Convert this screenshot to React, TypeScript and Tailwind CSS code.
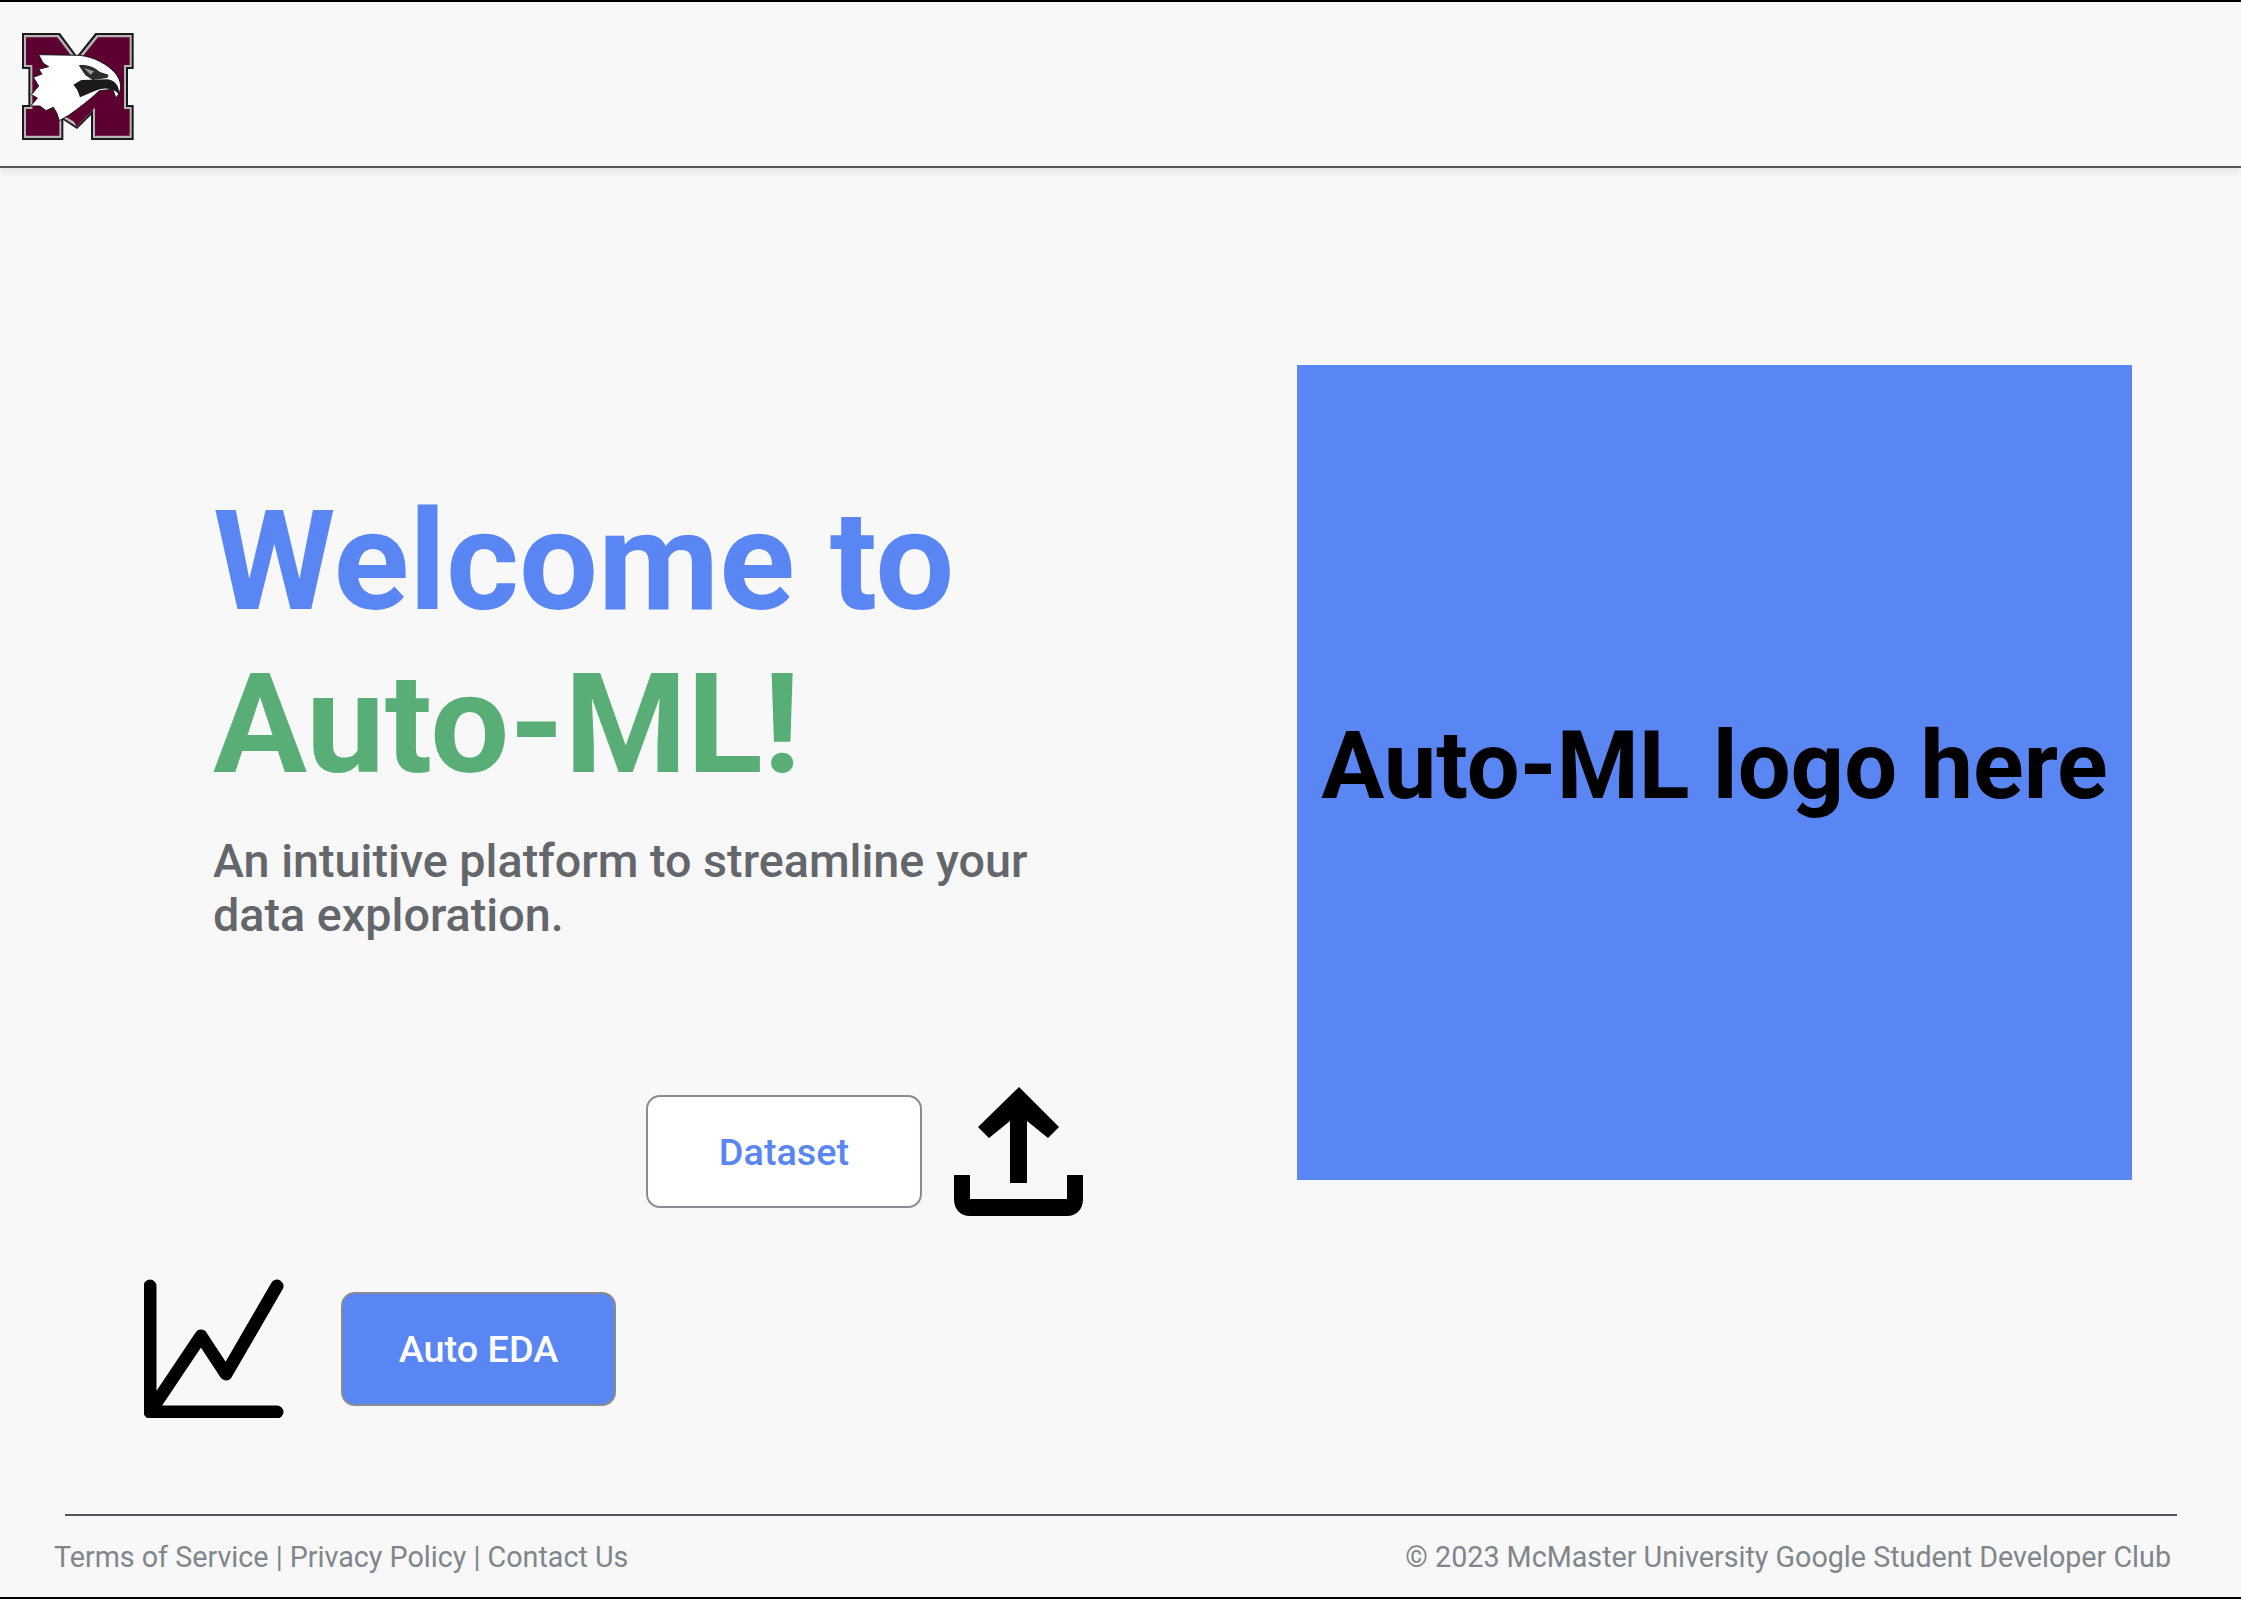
const roboto = "font-['Roboto',sans-serif]";

function McMasterLogo() {
    return (
        <svg viewBox="60 96 345 330" className="block h-[110px] w-[115px]">
            {/* block M */}
            <path
                d="M66 99H180L231 168L286 99H401V207H384V315H401V420H273V345L231 387L190 360V420H66V315H85V207H66Z"
                fill="#1a1a1a"
            />
            <path
                d="M72 105H176L231 178L290 105H395V201H378V321H395V414H279V330L231 380L184 350V414H72V321H91V201H72Z"
                fill="#b9b4b6"
            />
            <path
                d="M78 112H172L231 190L294 112H389V195H372V327H389V407H285V300L231 370L178 340V407H78V327H97V195H78Z"
                fill="#5b0030"
            />
            {/* eagle head */}
            <path
                d="M116 164L240 166C285 172 320 192 345 218C364 242 370 268 348 294L338 268L298 272C270 300 235 325 206 346L178 362L170 338L160 322L138 332L120 318L92 318L112 294L94 284L116 258L100 232L126 222L116 208L146 200L130 190Z"
                fill="#ffffff"
                stroke="#1a1a1a"
                strokeWidth="3"
            />
            <path
                d="M236 196C258 192 282 200 300 216L326 224L322 234L278 240L256 226Z"
                fill="#2e2e2e"
            />
            <path d="M252 204L282 214L272 224Z" fill="#9c9c9c" />
            <path
                d="M220 254L244 240L324 238C346 242 358 258 358 284C342 266 318 260 286 272L240 292L232 270Z"
                fill="#1a1a1a"
            />
            <path d="M212 344L294 280L292 316L230 380Z" fill="#5b0030" />
        </svg>
    );
}

function UploadIcon() {
    return (
        <svg viewBox="0 0 129 129" className="block h-[129px] w-[129px]">
            <path d="M56 96V34L35 51L24 40L65 0L105 40L94 51L73 34V96Z" fill="#000000" />
            <path
                d="M0 88H16V112H113V88H129V112C129 122 123 129 113 129H16C6 129 0 122 0 112Z"
                fill="#000000"
            />
        </svg>
    );
}

function ChartIcon() {
    return (
        <svg viewBox="0 0 140 139" fill="none" className="block h-[139px] w-[140px]">
            <path
                d="M6 7V133H133M6 133L57 57L82 95L133 7"
                stroke="#000000"
                strokeWidth="13"
                strokeLinecap="round"
                strokeLinejoin="round"
            />
        </svg>
    );
}

export default function App() {
    return (
        <div
            className={`flex h-[1599px] w-[2241px] flex-col overflow-hidden border-y-2 border-black bg-[#f8f8f8] ${roboto}`}
        >
            <header className="h-[166px] shrink-0 border-b-2 border-[#55565c] pl-5 pt-[30px] shadow-[0_5px_8px_rgba(0,0,0,0.07)]">
                <McMasterLogo />
            </header>

            <main className="flex flex-1">
                <div className="w-[1297px] shrink-0">
                    <div className="pl-[213px] pt-[312px]">
                        <h1 className="text-[140px] font-bold leading-[163px] text-[#5a86f4]">
                            Welcome to
                            <br />
                            <span className="text-[#58ae76]">Auto-ML!</span>
                        </h1>
                        <p className="mt-[28px] w-[880px] text-[46.7px] font-medium leading-[54px] text-[#63676c]">
                            An intuitive platform to streamline your data exploration.
                        </p>
                    </div>

                    <div className="mt-[145px] flex items-center gap-8 pl-[646px]">
                        <button className="flex h-[113px] w-[276px] items-center justify-center rounded-[14px] border-2 border-[#8a8a90] bg-white pt-[1px] text-[37.8px] font-medium text-[#5a86f4]">
                            Dataset
                        </button>
                        <UploadIcon />
                    </div>

                    <div className="mt-[63px] flex items-center gap-[57px] pl-[144px]">
                        <ChartIcon />
                        <button className="flex h-[114px] w-[275px] items-center justify-center rounded-[14px] border-2 border-[#8a8a90] bg-[#5a86f4] pt-[1px] text-[37.8px] font-medium text-white">
                            Auto EDA
                        </button>
                    </div>
                </div>

                <div className="mt-[197px] flex h-[815px] w-[835px] items-center justify-center bg-[#5a86f4] pb-[12px] text-[93.8px] font-bold whitespace-nowrap text-black">
                    Auto-ML logo here
                </div>
            </main>

            <footer className="shrink-0">
                <div className="ml-[65px] mr-16 border-t-2 border-[#55565c]" />
                <div className="flex h-[81px] items-center justify-between pl-[54px] pr-[70px] pt-[2px] text-[28.7px] text-[#80868b]">
                    <span>Terms of Service | Privacy Policy | Contact Us</span>
                    <span>© 2023 McMaster University Google Student Developer Club</span>
                </div>
            </footer>
        </div>
    );
}
